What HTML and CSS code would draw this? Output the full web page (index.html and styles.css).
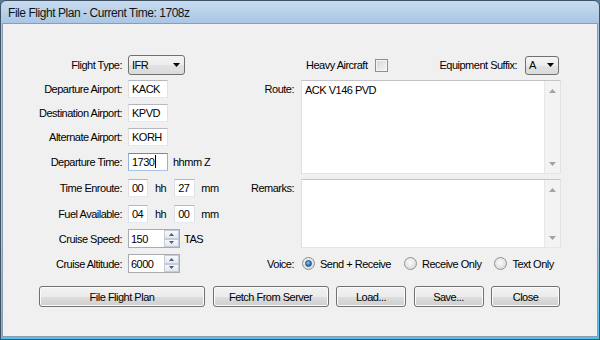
FILE: index.html
```html
<!DOCTYPE html>
<html lang="en">
<head>
  <meta charset="UTF-8" />
  <title>File Flight Plan</title>
  <link rel="stylesheet" href="styles.css">
</head>
<body>

<div class="window">
  <div class="titlebar">File Flight Plan - Current Time: 1708z</div>

  <div class="client">
    <div class="form">
      <!-- left column -->
      <div class="lbl">Flight Type:</div>
      <div class="fld">
        <div class="combo combo-type">
          <span>IFR</span>
          <svg width="7" height="4" viewBox="0 0 7 4"><polygon points="0,0 7,0 3.5,4" fill="#000"/></svg>
        </div>
      </div>

      <div class="lbl">Departure Airport:</div>
      <div class="fld"><div class="tb w40">KACK</div></div>

      <div class="lbl">Destination Airport:</div>
      <div class="fld"><div class="tb w40">KPVD</div></div>

      <div class="lbl">Alternate Airport:</div>
      <div class="fld"><div class="tb w40">KORH</div></div>

      <div class="lbl">Departure Time:</div>
      <div class="fld">
        <div class="tb w40 focused">1730<span class="caret"></span></div>
        <span class="unit">hhmm Z</span>
      </div>

      <div class="lbl">Time Enroute:</div>
      <div class="fld">
        <div class="tb w20">00</div>
        <span class="unit hh">hh</span>
        <div class="tb w21">27</div>
        <span class="unit mm">mm</span>
      </div>

      <div class="lbl">Fuel Available:</div>
      <div class="fld">
        <div class="tb w20">04</div>
        <span class="unit hh">hh</span>
        <div class="tb w21">00</div>
        <span class="unit mm">mm</span>
      </div>

      <div class="lbl">Cruise Speed:</div>
      <div class="fld">
        <div class="spin">
          <span class="spin-val">150</span>
          <div class="spin-btns">
            <div class="spin-btn"><svg width="5" height="3" viewBox="0 0 5 3"><polygon points="0,3 5,3 2.5,0" fill="#4a5d7e"/></svg></div>
            <div class="spin-btn"><svg width="5" height="3" viewBox="0 0 5 3"><polygon points="0,0 5,0 2.5,3" fill="#4a5d7e"/></svg></div>
          </div>
        </div>
        <span class="unit tas">TAS</span>
      </div>

      <div class="lbl">Cruise Altitude:</div>
      <div class="fld">
        <div class="spin">
          <span class="spin-val">6000</span>
          <div class="spin-btns">
            <div class="spin-btn"><svg width="5" height="3" viewBox="0 0 5 3"><polygon points="0,3 5,3 2.5,0" fill="#4a5d7e"/></svg></div>
            <div class="spin-btn"><svg width="5" height="3" viewBox="0 0 5 3"><polygon points="0,0 5,0 2.5,3" fill="#4a5d7e"/></svg></div>
          </div>
        </div>
      </div>

      <!-- right column -->
      <div class="extras">
        <div class="grp">
          <span>Heavy Aircraft</span>
          <span class="check"></span>
        </div>
        <div class="grp">
          <span>Equipment Suffix:</span>
          <div class="combo combo-suffix">
            <span>A</span>
            <svg width="7" height="4" viewBox="0 0 7 4"><polygon points="0,0 7,0 3.5,4" fill="#000"/></svg>
          </div>
        </div>
      </div>

      <div class="rlbl route-lbl">Route:</div>
      <div class="memo route">
        <div class="memo-text">ACK V146 PVD</div>
        <div class="vscroll">
          <svg width="7" height="4" viewBox="0 0 7 4"><polygon points="0,4 7,4 3.5,0" fill="#a3a3a3"/></svg>
          <svg width="7" height="4" viewBox="0 0 7 4"><polygon points="0,0 7,0 3.5,4" fill="#a3a3a3"/></svg>
        </div>
      </div>

      <div class="rlbl remarks-lbl">Remarks:</div>
      <div class="memo remarks">
        <div class="memo-text"></div>
        <div class="vscroll">
          <svg width="7" height="4" viewBox="0 0 7 4"><polygon points="0,4 7,4 3.5,0" fill="#a3a3a3"/></svg>
          <svg width="7" height="4" viewBox="0 0 7 4"><polygon points="0,0 7,0 3.5,4" fill="#a3a3a3"/></svg>
        </div>
      </div>

      <div class="rlbl voice-lbl">Voice:</div>
      <div class="voice">
        <div class="opt"><span class="radio on"><span class="dot"></span></span>Send + Receive</div>
        <div class="opt"><span class="radio"></span>Receive Only</div>
        <div class="opt"><span class="radio"></span>Text Only</div>
      </div>
    </div>

    <div class="buttons">
      <button class="btn b-file">File Flight Plan</button>
      <button class="btn b-fetch">Fetch From Server</button>
      <button class="btn b-load">Load...</button>
      <button class="btn b-save">Save...</button>
      <button class="btn b-close">Close</button>
    </div>
  </div>
</div>

</body>
</html>
```

FILE: styles.css
```css
* {
  box-sizing: border-box;
}
html, body {
  margin: 0;
}
body {
  width: 600px;
  height: 340px;
  overflow: hidden;
  background: #5c7a98;
  font-family: "Liberation Sans", Arial, sans-serif;
  font-size: 11px;
  letter-spacing: -0.5px;
  color: #000;
}

/* window frame */
.window {
  width: 600px;
  height: 340px;
  display: flex;
  flex-direction: column;
  border: 1px solid #3f5266;
  border-radius: 6px 6px 0 0;
  padding: 0 1px 2px 1px;
  background: linear-gradient(#c7dbef, #a9c6e5 22px, #a6c6e4 240px, #4cc4ef 336px);
}
.titlebar {
  height: 22px;
  line-height: 24px;
  padding-left: 6px;
  font-size: 12px;
  letter-spacing: -0.45px;
  color: #141414;
}
.client {
  flex: 1;
  background: #f0f0f0;
  border: 1px solid #8a9db3;
  padding-top: 29px;
}

/* form grid */
.form {
  display: grid;
  grid-template-columns: 125px 112px 61px 260px;
  grid-template-rows: 24px 24px 24px 24px 26px 26px 25px 25px 25px;
  align-items: center;
}
.lbl {
  grid-column: 1;
  text-align: right;
  padding-right: 6px;
}
.fld {
  grid-column: 2;
  display: flex;
  align-items: center;
}
.rlbl {
  grid-column: 3;
  text-align: right;
  padding-right: 7px;
}
.route-lbl { grid-row: 2; }
.remarks-lbl { grid-row: 6; }
.voice-lbl { grid-row: 9; }

/* text boxes */
.tb {
  height: 18px;
  line-height: 16px;
  padding: 0 3px;
  background: #fff;
  border: 1px solid;
  border-color: #b5b8bf #dfe2e8 #e3e9ef #dbdfe6;
  white-space: nowrap;
}
.w40 { width: 40px; }
.w20 { width: 20px; }
.w21 { width: 21px; }
.tb.focused {
  border-color: #5b8dbd #8fb5da #a8c8e6 #8fb5da;
}
.caret {
  display: inline-block;
  width: 1px;
  height: 13px;
  margin-left: 1px;
  vertical-align: -2px;
  background: #000;
}
.unit {
  margin-left: 5px;
}
.unit.hh {
  margin: 0 8px 0 7px;
}
.unit.mm {
  margin-left: 6px;
}
.unit.tas {
  margin-left: 4px;
}

/* combo boxes */
.combo {
  height: 20px;
  display: flex;
  align-items: center;
  justify-content: space-between;
  padding: 0 4px 0 3px;
  border: 1px solid #707070;
  border-radius: 3px;
  background: linear-gradient(#f4f4f4, #ececec 50%, #e2e2e2 51%, #dadada);
}
.combo-type { width: 57px; }
.combo-suffix { width: 34px; height: 19px; }

/* numeric up-down */
.spin {
  width: 52px;
  height: 19px;
  display: flex;
  align-items: center;
  justify-content: space-between;
  background: #fff;
  border: 1px solid #a9abb0;
  padding-left: 2px;
}
.spin-btns {
  width: 15px;
  height: 17px;
  display: flex;
  flex-direction: column;
}
.spin-btn {
  flex: 1;
  display: flex;
  align-items: center;
  justify-content: center;
  border: 1px solid #c4ccd6;
  background: linear-gradient(#f6f8fa, #e3e8ee);
}

/* right column */
.extras {
  grid-column: 4;
  grid-row: 1;
  display: flex;
  justify-content: space-between;
  align-items: center;
  padding: 0 2px 0 5px;
}
.grp {
  display: flex;
  align-items: center;
  gap: 8px;
}
.check {
  width: 13px;
  height: 13px;
  border: 1px solid #8e8f8f;
  background: linear-gradient(135deg, #d3d5d9, #f7f7f7);
  box-shadow: inset 0 0 0 1px #f4f4f4;
}

.memo {
  grid-column: 4;
  align-self: start;
  display: flex;
  background: #fff;
  border: 1px solid;
  border-color: #c2c4c9 #e0e2e7 #e3e6ea #dcdfe4;
}
.memo.route {
  grid-row: 2 / 6;
  margin-top: 3px;
  height: 94px;
}
.memo.remarks {
  grid-row: 6 / 9;
  margin-top: 4px;
  height: 69px;
}
.memo-text {
  flex: 1;
  padding: 3px 3px;
}
.vscroll {
  width: 16px;
  display: flex;
  flex-direction: column;
  align-items: center;
  justify-content: space-between;
  padding: 8px 0 7px;
  background: #f3f3f3;
  border-left: 1px solid #e6e6e6;
}

.voice {
  grid-column: 4;
  grid-row: 9;
  display: flex;
  align-items: center;
  gap: 13px;
  padding-left: 1px;
}
.opt {
  display: flex;
  align-items: center;
  gap: 5px;
}
.radio {
  width: 13px;
  height: 13px;
  border-radius: 50%;
  border: 1px solid #929292;
  background: radial-gradient(circle at 45% 40%, #fbfbfb, #e2e2e2 60%, #cfcfcf);
  display: flex;
  align-items: center;
  justify-content: center;
}
.dot {
  width: 7px;
  height: 7px;
  border-radius: 50%;
  background: radial-gradient(circle at 40% 35%, #8cc6f5, #2a7ccd 55%, #17508c);
  border: 1px solid #1d4f80;
}

/* bottom buttons */
.buttons {
  display: flex;
  gap: 7.5px;
  margin-top: 10px;
  padding-left: 36px;
}
.btn {
  height: 21px;
  padding: 0;
  font-family: inherit;
  font-size: 11px;
  letter-spacing: -0.5px;
  color: #000;
  border: 1px solid #707070;
  border-radius: 3px;
  background: linear-gradient(#f2f2f2, #ebebeb 50%, #dddddd 51%, #cfcfcf);
  box-shadow: inset 0 0 0 1px #fcfcfc;
}
.b-file { width: 166px; }
.b-fetch { width: 116px; }
.b-load { width: 70px; }
.b-save { width: 70px; }
.b-close { width: 69px; }
```
